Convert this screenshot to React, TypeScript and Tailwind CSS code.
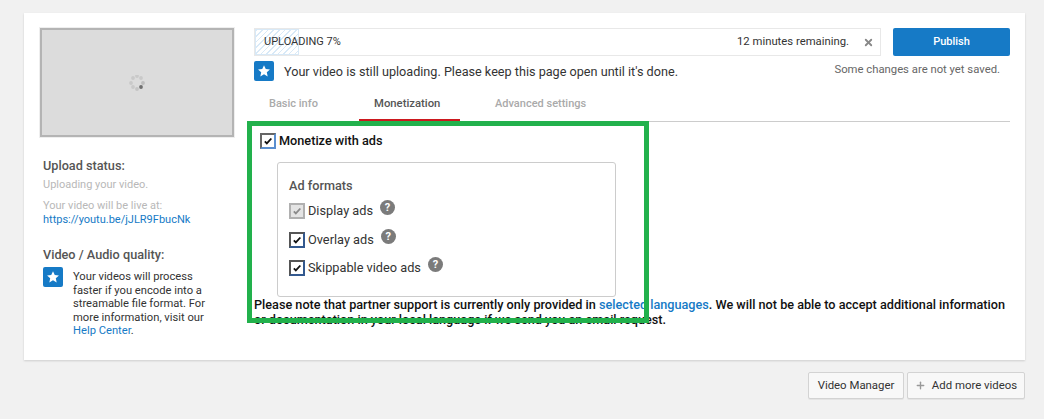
import { Plus, X } from "lucide-react";

const font = { fontFamily: "Roboto, sans-serif" };

const StarBadge = () => (
  <div className="w-5 h-5 shrink-0 rounded-[2px] bg-[#167ac6] flex items-center justify-center">
    <svg viewBox="0 0 24 24" className="w-[14px] h-[14px]" fill="#fff">
      <path d="M12 2l3 6.6 7.2.8-5.4 4.8 1.5 7.1L12 17.7l-6.3 3.6 1.5-7.1L1.8 9.4 9 8.6z" />
    </svg>
  </div>
);

const Spinner = () => {
  const dots = [
    [8, 1, "#c9c9c9"],
    [12, 3, "#c9c9c9"],
    [14, 8, "#bdbdbd"],
    [12, 12, "#6f6f6f"],
    [8, 14, "#c4c4c4"],
    [4, 12, "#c9c9c9"],
    [2, 8, "#c9c9c9"],
    [4, 3, "#c9c9c9"],
  ] as const;
  return (
    <svg viewBox="0 0 16 16" className="w-4 h-4">
      {dots.map(([x, y, c]) => (
        <circle key={`${x}-${y}`} cx={x} cy={y} r="1.9" fill={c} />
      ))}
    </svg>
  );
};

const Check = ({ color = "#111" }: { color?: string }) => (
  <svg viewBox="0 0 12 12" className="w-[10px] h-[10px]" fill="none" stroke={color} strokeWidth="2.2">
    <path d="M2.2 6.4l2.4 2.4L10 3" />
  </svg>
);

const AdOption = ({ label, disabled }: { label: string; disabled?: boolean }) => (
  <div className="flex items-start h-[28.5px]">
    <div
      className={
        disabled
          ? "w-4 h-4 mt-[1px] border-2 border-[#b0b0b0] bg-[#e4e4e4] flex items-center justify-center"
          : "w-4 h-4 mt-[1px] border-2 border-[#33598f] border-t-[#555] border-l-[#555] bg-white flex items-center justify-center"
      }
    >
      <Check color={disabled ? "#8a8a8a" : "#111"} />
    </div>
    <span className="ml-[3px] text-[12.75px] leading-[18px] text-[#333]">{label}</span>
    <div className="ml-[7px] -mt-[2px] w-[15px] h-[15px] rounded-full bg-[#7b7b7b] text-white text-[11px] font-bold leading-[15px] text-center">
      ?
    </div>
  </div>
);

export default function App() {
  return (
    <div className="relative w-[1044px] h-[419px] overflow-hidden bg-[#f1f1f1] pt-[13px] pl-6" style={font}>
      <div className="w-[1001px] h-[347px] bg-white shadow-[0_1px_2px_rgba(0,0,0,0.15)] pl-4 pt-[15px] flex">
        {/* Left column */}
        <div className="w-[194px] shrink-0">
          <div className="w-[194px] h-[109px] border-2 border-[#b4b4b4] outline outline-1 outline-[#eeeeee] bg-[#dcdcdc] flex items-center justify-center">
            <Spinner />
          </div>
          <div className="pl-[3px] pt-[20px]">
            <h3 className="text-[12.7px] leading-[18px] font-medium text-[#555]">Upload status:</h3>
            <p className="mt-[2px] text-[11px] leading-[16px] text-[#b8b8b8]">Uploading your video.</p>
            <p className="mt-[6px] text-[11px] leading-[14px] text-[#b8b8b8]">Your video will be live at:</p>
            <a className="block text-[11px] leading-[14px] text-[#167ac6]">https://youtu.be/jJLR9FbucNk</a>
            <h3 className="mt-[19px] text-[12.7px] leading-[18px] font-medium text-[#555]">Video / Audio quality:</h3>
            <div className="mt-[3px] flex">
              <StarBadge />
              <p className="ml-[10px] mt-[3px] w-[133px] text-[11.2px] leading-[13.5px] text-[#333]">
                Your videos will process faster if you encode into a streamable file format. For more information, visit our{" "}
                <a className="text-[#167ac6]">Help Center</a>.
              </p>
            </div>
          </div>
        </div>

        {/* Right column */}
        <div className="ml-[20px] w-[756px]">
          <div className="flex">
            <div className="relative w-[627px] h-[28px] border border-[#e8e8e8] flex items-center justify-between pl-[9px] pr-[6px]">
              <div className="absolute left-0 top-0 bottom-0 w-[44px] border border-[#d8e9f7] bg-[repeating-linear-gradient(135deg,#d8e9f7_0,#d8e9f7_1px,#ffffff_1px,#ffffff_4px)]" />
              <span className="relative text-[11px] text-[#333]">UPLOADING 7%</span>
              <div className="relative flex items-center">
                <span className="text-[11.3px] text-[#333]">12 minutes remaining.</span>
                <X className="ml-[14px] w-[11px] h-[11px] text-[#888]" strokeWidth={4} />
              </div>
            </div>
            <div className="ml-3 w-[117px] h-[28px] rounded-[2px] bg-[#167ac6] text-white text-[11px] font-medium flex items-center justify-center">
              Publish
            </div>
          </div>
          <div className="mt-[5px] flex justify-between">
            <div className="flex items-start">
              <StarBadge />
              <span className="ml-[10px] mt-[1px] text-[12.65px] leading-[20px] text-[#333]">
                Your video is still uploading. Please keep this page open until it's done.
              </span>
            </div>
            <span className="mr-[10px] mt-[1px] text-[11.3px] leading-[16px] text-[#666]">Some changes are not yet saved.</span>
          </div>

          <div className="mt-[9px] h-[31px] border-b border-[#cccccc] flex text-[11px] font-medium">
            <div className="w-[105px] h-[31px] pl-[15px] pt-[5px] text-[#aaaaaa]">Basic info</div>
            <div className="w-[101px] h-[31px] border-b-[3px] border-[#cc181e] pl-[15px] pt-[5px] text-[11.3px] text-[#555]">Monetization</div>
            <div className="ml-[35px] pt-[5px] text-[#aaaaaa]">Advanced settings</div>
          </div>

          <div className="mt-[10px] flex items-center pl-[6px] h-[18px]">
            <div className="w-4 h-4 border-2 border-[#5b8fd0] border-t-[#666] border-l-[#666] bg-white flex items-center justify-center">
              <Check />
            </div>
            <span className="ml-[3px] text-[12.7px] font-medium text-[#111]">Monetize with ads</span>
          </div>

          <div className="ml-[23px] mt-[12px] w-[339px] h-[135px] border border-[#cccccc] rounded-[3px] pl-[11px] pt-[14px]">
            <h4 className="text-[12.7px] leading-[18px] font-medium text-[#555] mb-[7px]">Ad formats</h4>
            <AdOption label="Display ads" disabled />
            <AdOption label="Overlay ads" />
            <AdOption label="Skippable video ads" />
          </div>

          <p className="w-[756px] text-[12.67px] leading-[15px] font-medium text-[#111]">
            Please note that partner support is currently only provided in <a className="text-[#167ac6]">selected languages</a>. We will not be able to accept additional information or documentation in your local language if we send you an email request.
          </p>
        </div>
      </div>

      <div className="mt-[12px] mr-[19px] flex justify-end gap-[3px]">
        <div className="w-[96px] h-[27px] border border-[#d3d3d3] rounded-[2px] bg-[#f8f8f8] shadow-[0_1px_0_rgba(0,0,0,0.05)] text-[11.4px] text-[#333] flex items-center justify-center">
          Video Manager
        </div>
        <div className="w-[118px] h-[27px] border border-[#d3d3d3] rounded-[2px] bg-[#f8f8f8] shadow-[0_1px_0_rgba(0,0,0,0.05)] text-[11.4px] text-[#333] flex items-center justify-center">
          <Plus className="w-[11px] h-[11px] mr-[6px] text-[#999]" strokeWidth={3} />
          Add more videos
        </div>
      </div>

      {/* green annotation box drawn over the screenshot */}
      <div className="absolute left-[247px] top-[121px] w-[402px] h-[202px] border-[5px] border-[#22b14c]" />
    </div>
  );
}
